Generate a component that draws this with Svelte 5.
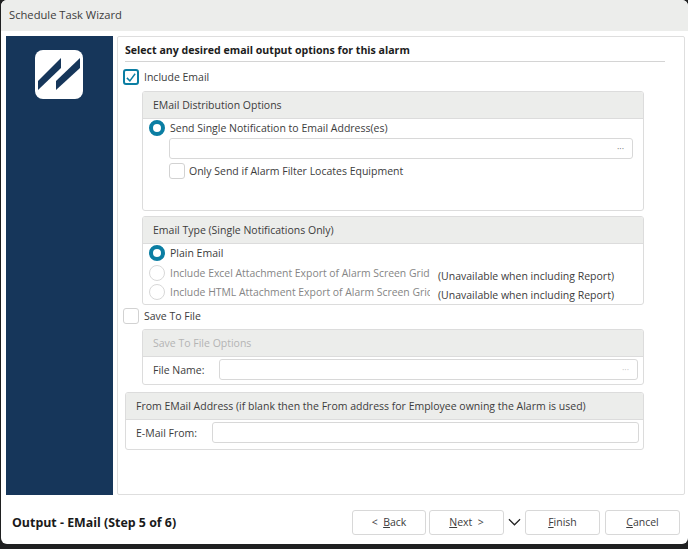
<script>
  const footerButtons = [
    { before: '<  ', key: 'B', after: 'ack', cls: 'back' },
    { before: '', key: 'N', after: 'ext  >', cls: 'next' }
  ]
</script>

<div class="window">
  <header class="title">Schedule Task Wizard</header>

  <div class="body">
    <aside class="side">
      <div class="logo">
        <svg viewBox="0 0 48 49" width="48" height="49">
          <path d="M3 31 L26 8 L26 18 L3 40 Z" fill="#16365a" />
          <path d="M21 31 L45 8 L45 18 L21 40 Z" fill="#16365a" />
        </svg>
      </div>
    </aside>

    <main class="panel">
      <h1>Select any desired email output options for this alarm</h1>

      <label class="check-row include">
        <span class="check on">
          <svg viewBox="0 0 16 16" width="13" height="13"><path d="M2.5 8.5 L6.5 12.5 L13.5 3" fill="none" stroke="#0b7ea3" stroke-width="1.9" /></svg>
        </span>
        Include Email
      </label>

      <section class="group dist">
        <div class="group-head">EMail Distribution Options</div>
        <div class="radio-row first"><span class="radio on"></span>Send Single Notification to Email Address(es)</div>
        <div class="picker email"><span>···</span></div>
        <label class="check-row only"><span class="check"></span>Only Send if Alarm Filter Locates Equipment</label>
      </section>

      <section class="group type">
        <div class="group-head">Email Type (Single Notifications Only)</div>
        <div class="radio-row first"><span class="radio on"></span>Plain Email</div>
        <div class="radio-row off">
          <span class="radio"></span><span class="clip">Include Excel Attachment Export of Alarm Screen Grid</span>
          <em>(Unavailable when including Report)</em>
        </div>
        <div class="radio-row off">
          <span class="radio"></span><span class="clip">Include HTML Attachment Export of Alarm Screen Grid</span>
          <em>(Unavailable when including Report)</em>
        </div>
      </section>

      <label class="check-row save"><span class="check"></span>Save To File</label>

      <section class="group file">
        <div class="group-head muted">Save To File Options</div>
        <div class="field-row">
          <span class="field-label">File Name:</span>
          <div class="picker faded"><span>···</span></div>
        </div>
      </section>

      <section class="group from">
        <div class="group-head">From EMail Address (if blank then the From address for Employee owning the Alarm is used)</div>
        <div class="field-row">
          <span class="field-label">E-Mail From:</span>
          <div class="picker"></div>
        </div>
      </section>
    </main>
  </div>

  <footer class="foot">
    <strong>Output - EMail (Step 5 of 6)</strong>
    <div class="buttons">
      {#each footerButtons as b}
        <button class={b.cls}>{b.before}<u>{b.key}</u>{b.after}</button>
      {/each}
      <svg class="chev" viewBox="0 0 14 8" width="13" height="8"><path d="M1 1 L7 7 L13 1" fill="none" stroke="#222" stroke-width="1.3" /></svg>
      <button class="finish"><u>F</u>inish</button>
      <button class="cancel"><u>C</u>ancel</button>
    </div>
  </footer>
</div>

<style>
  :global(body) {
    background: #1f2021;
  }
  .window {
    width: 687px;
    height: 544px;
    margin-left: 1px;
    box-sizing: border-box;
    background: #fff;
    border-radius: 6px;
    font-family: "Open Sans", sans-serif;
    font-size: 10.5px;
    color: #3c3c3c;
    overflow: hidden;
    display: flex;
    flex-direction: column;
  }
  .title {
    height: 31px;
    flex: none;
    background: #ecedeb;
    padding: 7px 0 0 8px;
    box-sizing: border-box;
    font-size: 11.2px;
    line-height: 16px;
  }
  .body {
    display: flex;
    height: 459px;
    margin-top: 5px;
    padding-left: 5px;
    flex: none;
  }
  .side {
    width: 107px;
    flex: none;
    background: #16365a;
    padding: 14px 0 0 29px;
    box-sizing: border-box;
  }
  .logo {
    width: 48px;
    height: 49px;
    background: #fff;
    border-radius: 8px;
  }
  .logo svg {
    display: block;
  }
  .panel {
    width: 568px;
    margin-left: 4px;
    border: 1px solid #dedede;
    border-radius: 2px;
    box-sizing: border-box;
    padding: 7px 0 0 7px;
    background: #fff;
  }
  h1 {
    margin: 0;
    width: 540px;
    height: 18px;
    font-size: 10.6px;
    line-height: 13px;
    font-weight: 700;
    color: #1c1c1c;
    border-bottom: 1px solid #d4d4d4;
    box-sizing: border-box;
  }
  .check-row {
    display: flex;
    align-items: center;
    gap: 5px;
  }
  .check {
    width: 16px;
    height: 16px;
    flex: none;
    box-sizing: border-box;
    border: 1px solid #d2d2d2;
    border-radius: 3px;
    display: flex;
    align-items: center;
    justify-content: center;
  }
  .check.on {
    border: 2px solid #0b7ea3;
  }
  .include {
    margin: 7px 0 0 -2px;
    height: 16px;
  }
  .group {
    border: 1px solid #dcdcdc;
    border-radius: 3px;
    box-sizing: border-box;
    width: 502px;
    margin-left: 17px;
    overflow: hidden;
  }
  .group-head {
    height: 27px;
    background: #ecedeb;
    border-bottom: 1px solid #dcdcdc;
    box-sizing: border-box;
    padding: 6px 0 0 10px;
    line-height: 14px;
  }
  .muted {
    color: #b4b4b4;
  }
  .dist {
    height: 120px;
    margin-top: 6px;
  }
  .type {
    height: 89px;
    margin-top: 5px;
  }
  .file {
    height: 56px;
    margin-top: 4px;
  }
  .from {
    width: 519px;
    height: 58px;
    margin: 7px 0 0 0;
  }
  .radio-row {
    display: flex;
    align-items: center;
    height: 19px;
    padding-left: 6px;
    white-space: nowrap;
  }
  .radio-row.first {
    margin-top: -1px;
    margin-bottom: 1px;
  }
  .radio {
    width: 16px;
    height: 16px;
    flex: none;
    box-sizing: border-box;
    border-radius: 50%;
    border: 1.5px solid #d8d8d8;
    margin-right: 5px;
  }
  .radio.on {
    border: 4px solid #0b7ea3;
  }
  .off {
    color: #858585;
  }
  .clip {
    width: 260px;
    overflow: hidden;
    font-size: 10.4px;
  }
  .off em {
    font-style: normal;
    color: #3c3c3c;
    margin: 6px 0 0 8px;
  }
  .picker {
    height: 21px;
    flex: 1;
    border: 1px solid #d8d8d8;
    border-radius: 3px;
    box-sizing: border-box;
    display: flex;
    align-items: center;
    justify-content: flex-end;
    padding-right: 8px;
    font-size: 9px;
    color: #777;
  }
  .faded {
    color: #c4c4c4;
  }
  .email {
    flex: none;
    width: 464px;
    margin: 0 0 0 26px;
  }
  .only {
    margin: 3px 0 0 26px;
    height: 18px;
    gap: 4px;
  }
  .save {
    height: 18px;
    margin: 2px 0 0 -2px;
  }
  .field-row {
    display: flex;
    align-items: center;
    height: 25px;
    padding: 0 5px 0 10px;
  }
  .field-label {
    width: 66px;
    flex: none;
  }
  .from .field-label {
    width: 76px;
  }
  .from .field-row {
    padding-right: 4px;
  }
  .foot {
    flex: 1;
    display: flex;
    align-items: center;
    padding: 5px 8px 0 11px;
    justify-content: space-between;
  }
  .foot strong {
    font-size: 12.4px;
    font-weight: 700;
    color: #1a1a1a;
  }
  .buttons {
    display: flex;
    align-items: center;
    gap: 3px;
  }
  button {
    width: 74px;
    height: 25px;
    padding: 0;
    background: #fff;
    border: 1px solid #d8d8d8;
    border-radius: 3px;
    font: inherit;
    color: #3c3c3c;
    white-space: pre;
  }
  .next {
    width: 75px;
  }
  .chev {
    margin: 0 1px;
  }
  .finish {
    width: 75px;
  }
  .cancel {
    width: 75px;
    margin-left: 2px;
  }
</style>
